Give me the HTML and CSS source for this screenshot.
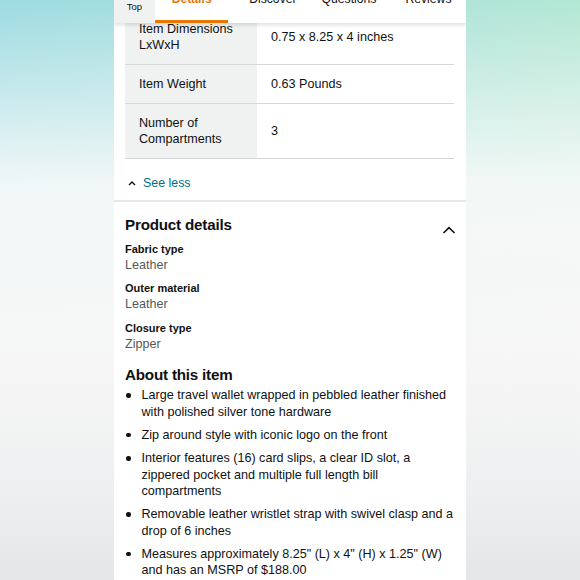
FILE: index.html
```html
<!DOCTYPE html>
<html lang="en">
<head>
<meta charset="utf-8">
<title>Product details</title>
<link rel="stylesheet" href="styles.css">
</head>
<body>
<div class="page">
  <nav class="tabs">
    <div class="tab tab-top"><span class="tab-top-label">Top</span></div>
    <div class="tab tab-active"><span class="tab-label">Details</span></div>
    <div class="tab tab-discover"><span class="tab-label">Discover</span></div>
    <div class="tab"><span class="tab-label">Questions</span></div>
    <div class="tab"><span class="tab-label">Reviews</span></div>
  </nav>

  <section class="specs">
    <div class="spec-row">
      <div class="spec-k">Item Dimensions LxWxH</div>
      <div class="spec-v">0.75 x 8.25 x 4 inches</div>
    </div>
    <div class="spec-row">
      <div class="spec-k">Item Weight</div>
      <div class="spec-v">0.63 Pounds</div>
    </div>
    <div class="spec-row">
      <div class="spec-k">Number of Compartments</div>
      <div class="spec-v">3</div>
    </div>
  </section>

  <div class="see-less">
    <svg class="caret" width="8" height="6" viewBox="0 0 8 6"><polyline points="1,5 4,2 7,5" fill="none" stroke="#0f1111" stroke-width="1.4"/></svg>
    <span>See less</span>
  </div>

  <section class="details">
    <div class="details-head">
      <h2 class="heading">Product details</h2>
      <svg class="chevron" width="14" height="14" viewBox="0 0 14 14"><polyline points="1.5,10 7,4.6 12.5,10" fill="none" stroke="#0f1111" stroke-width="1.6"/></svg>
    </div>
    <div class="attrs">
      <div class="attr">
        <div class="attr-k">Fabric type</div>
        <div class="attr-v">Leather</div>
      </div>
      <div class="attr">
        <div class="attr-k">Outer material</div>
        <div class="attr-v">Leather</div>
      </div>
      <div class="attr">
        <div class="attr-k">Closure type</div>
        <div class="attr-v">Zipper</div>
      </div>
    </div>

    <h2 class="heading about">About this item</h2>
    <ul class="bullets">
      <li>Large travel wallet wrapped in pebbled leather finished with polished silver tone hardware</li>
      <li>Zip around style with iconic logo on the front</li>
      <li>Interior features (16) card slips, a clear ID slot, a zippered pocket and multiple full length bill compartments</li>
      <li>Removable leather wristlet strap with swivel clasp and a drop of 6 inches</li>
      <li>Measures approximately 8.25" (L) x 4" (H) x 1.25" (W) and has an MSRP of $188.00</li>
    </ul>
  </section>
</div>
</body>
</html>
```

FILE: styles.css
```css
html, body {
  margin: 0;
  padding: 0;
  height: 580px;
  overflow: hidden;
}

body {
  font-family: "Liberation Sans", Arial, sans-serif;
  color: #0f1111;
  background:
    linear-gradient(to bottom, rgba(255,255,255,0) 0%, rgba(250,250,250,0.9) 32%, #f7f7f7 60%, #eeeff0 85%, #e5e6e8 100%),
    linear-gradient(to right, #9ddbe1 0%, #a9e0dc 50%, #b3e7d4 100%);
}

.page {
  width: 352px;
  height: 580px;
  margin: 0 auto;
  background: #fff;
  position: relative;
  overflow: hidden;
}

/* sticky tab bar overlaying the content */
.tabs {
  position: absolute;
  top: 0;
  left: 0;
  right: 0;
  height: 23px;
  background: #fff;
  display: flex;
  box-shadow: 0 2px 4px rgba(0,0,0,0.13);
  z-index: 2;
  overflow: hidden;
}

.tab {
  padding: 0 14.5px;
  font-size: 12.2px;
  white-space: nowrap;
  box-sizing: border-box;
  height: 23px;
}

.tab-label {
  display: block;
  line-height: 14px;
  margin-top: -8px;
}

.tab-top {
  width: 43px;
  padding: 0;
  background: #f0f2f2;
  text-align: center;
  font-size: 9.5px;
}

.tab-top-label {
  display: block;
  line-height: 12px;
  margin-top: 1px;
}

.tab-active {
  width: 77px;
  padding: 0 0 0 1px;
  margin-right: 3px;
  text-align: center;
  color: #e47911;
  font-weight: bold;
  border-bottom: 3px solid #e77600;
}

.tab-discover {
  padding: 0 10.5px 0 18.5px;
}

/* spec table */
.specs {
  margin: 10px 12px 0 11px;
}

.spec-row {
  display: grid;
  grid-template-columns: 132px 1fr;
  border-bottom: 1px solid #d5d9d9;
  font-size: 12.6px;
  line-height: 16px;
}

.spec-k {
  background: #f0f2f2;
  padding: 11px 14px;
}

.spec-v {
  padding: 11px 14px;
  display: flex;
  align-items: center;
}

.see-less {
  display: flex;
  align-items: center;
  height: 18px;
  padding: 15px 0 8px 14px;
  color: #007185;
  font-size: 12.4px;
  border-bottom: 2px solid #e6e8e8;
}

.caret {
  margin-right: 7px;
}

/* product details */
.details {
  padding: 12px 11px 0 11px;
}

.details-head {
  display: flex;
  justify-content: space-between;
  align-items: flex-start;
}

.heading {
  margin: 0;
  font-size: 15.2px;
  line-height: 22px;
  font-weight: bold;
  letter-spacing: -0.2px;
}

.chevron {
  margin-top: 9px;
  margin-right: -1px;
}

.attrs {
  display: flex;
  flex-direction: column;
  gap: 7.6px;
  margin-top: 4.5px;
}

.attr-k {
  font-size: 11px;
  font-weight: bold;
  line-height: 15px;
}

.attr-v {
  font-size: 12.6px;
  line-height: 17px;
  color: #565959;
}

.about {
  margin-top: 12.5px;
  line-height: 20px;
}

.bullets {
  list-style: none;
  margin: 2px 0 0 0;
  padding: 0;
}

.bullets li {
  display: flex;
  font-size: 12.6px;
  line-height: 16.5px;
  margin-bottom: 6.7px;
}

.bullets li::before {
  content: "";
  flex: none;
  width: 4.5px;
  height: 4.5px;
  border-radius: 50%;
  background: #0f1111;
  margin: 6px 11px 0 1px;
}
```
